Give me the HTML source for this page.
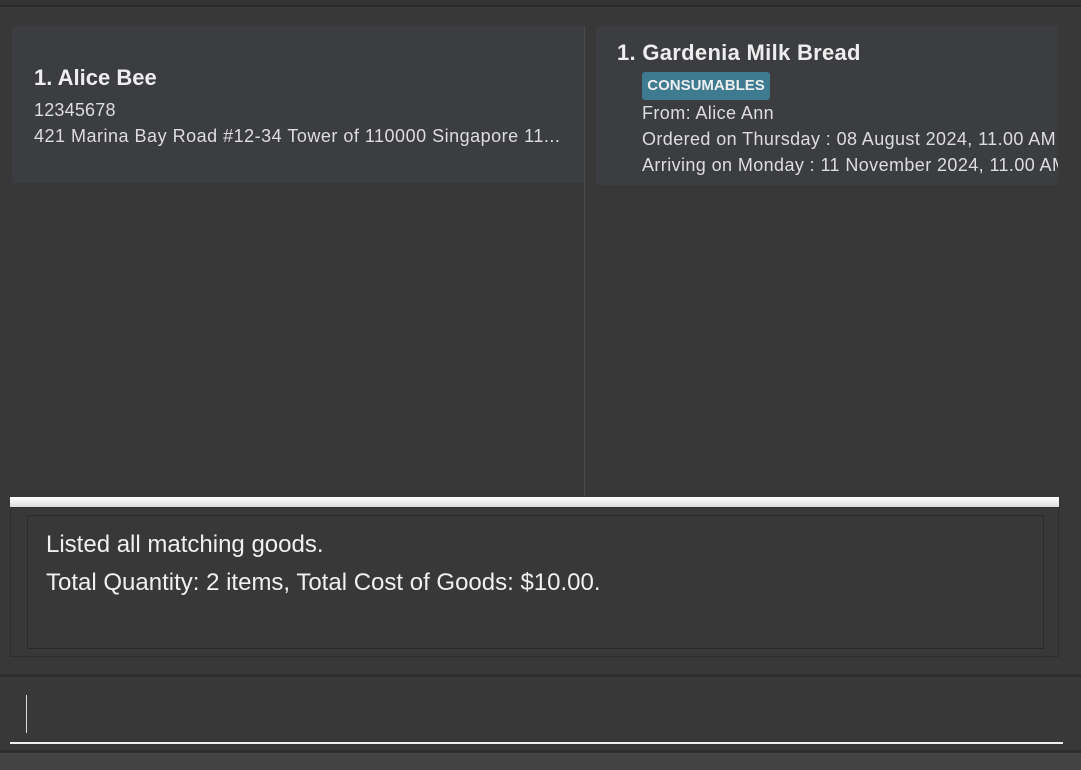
<!DOCTYPE html>
<html><head><style>
*{margin:0;padding:0;box-sizing:border-box}
body{width:1081px;height:770px;background:#383838;position:relative;overflow:hidden;font-family:"Liberation Sans",sans-serif;color:#eee}
.a{position:absolute}
</style></head><body>
<div class="a" style="left:0;top:0;width:1081px;height:5px;background:#333"></div>
<div class="a" style="left:0;top:5px;width:1081px;height:2px;background:#2a2a2a"></div>
<div class="a" style="left:12px;top:26px;width:572px;height:157px;background:#3c3d40"></div>
<div class="a" style="left:34px;top:65px;font-size:22px;font-weight:bold;color:#eee">1. Alice Bee</div>
<div class="a" style="left:34px;top:100px;font-size:18px;color:#ddd;letter-spacing:0.2px">12345678</div>
<div class="a" style="left:34px;top:126px;font-size:18px;color:#ddd;white-space:nowrap;letter-spacing:0.5px">421 Marina Bay Road #12-34 Tower of 110000 Singapore 11...</div>
<div class="a" style="left:584px;top:26px;width:1px;height:470px;background:#4a4a4a"></div>
<div class="a" style="left:596px;top:26px;width:462px;height:159px;background:#3c3d40;overflow:hidden">
<div class="a" style="left:21px;top:14px;font-size:22px;font-weight:bold;white-space:nowrap;letter-spacing:0.3px">1. Gardenia Milk Bread</div>
<div class="a" style="left:46px;top:46px;height:28px;width:128px;background:#3e7b91;border-radius:3px;font-size:15px;font-weight:bold;line-height:28px;text-align:center;color:#eee">CONSUMABLES</div>
<div class="a" style="left:46px;top:77px;font-size:18px;color:#ddd;white-space:nowrap;letter-spacing:0.4px">From: Alice Ann</div>
<div class="a" style="left:46px;top:103px;font-size:18px;color:#ddd;white-space:nowrap;letter-spacing:0.4px">Ordered on Thursday : 08 August 2024, 11.00 AM</div>
<div class="a" style="left:46px;top:129px;font-size:18px;color:#ddd;white-space:nowrap;letter-spacing:0.4px">Arriving on Monday : 11 November 2024, 11.00 AM</div>
</div>
<div class="a" style="left:10px;top:497px;width:1049px;height:10px;background:linear-gradient(#fff,#ddd)"></div>
<div class="a" style="left:10px;top:507px;width:1049px;height:150px;border:1px solid #2e2e2e"></div>
<div class="a" style="left:27px;top:515px;width:1017px;height:134px;border:1px solid #2a2a2a;background:#383838"></div>
<div class="a" style="left:46px;top:531px;font-size:24px;color:#f0f0f0">Listed all matching goods.</div>
<div class="a" style="left:46px;top:569px;font-size:24px;color:#f0f0f0">Total Quantity: 2 items, Total Cost of Goods: $10.00.</div>
<div class="a" style="left:0;top:674px;width:1081px;height:3px;background:#2e2e2e"></div>
<div class="a" style="left:26px;top:695px;width:1px;height:38px;background:#ddd"></div>
<div class="a" style="left:10px;top:742px;width:1053px;height:2px;background:#eee"></div>
<div class="a" style="left:0;top:750px;width:1081px;height:3px;background:#2e2e2e"></div>
<div class="a" style="left:0;top:753px;width:1081px;height:17px;background:#434343"></div>
</body></html>
